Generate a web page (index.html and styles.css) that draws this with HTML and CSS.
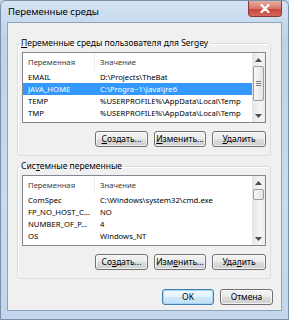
FILE: index.html
```html
<!DOCTYPE html>
<html lang="ru">
<head>
  <meta charset="UTF-8" />
  <title>Переменные среды</title>
  <link rel="stylesheet" href="styles.css">
</head>
<body>
  <div class="window">
    <div class="titlebar">
      <span class="title">Переменные среды</span>
      <span class="close">
        <svg width="10" height="9" viewBox="0 0 10 9"><path d="M1.5 1 L8.5 8 M8.5 1 L1.5 8" stroke="#fff" stroke-width="2.2" stroke-linecap="round"/></svg>
      </span>
    </div>

    <div class="client">
      <!-- user variables -->
      <fieldset class="group">
        <legend><u>П</u>еременные среды пользователя для Sergey</legend>
        <div class="list">
          <div class="table">
            <div class="row head"><span class="col1">Переменная</span><span>Значение</span></div>
            <div class="row"><span>EMAIL</span><span>D:\Projects\TheBat</span></div>
            <div class="row sel"><span>JAVA_HOME</span><span>C:\Progra~1\Java\jre6</span></div>
            <div class="row"><span>TEMP</span><span>%USERPROFILE%\AppData\Local\Temp</span></div>
            <div class="row"><span>TMP</span><span>%USERPROFILE%\AppData\Local\Temp</span></div>
          </div>
          <div class="scrollbar">
            <div class="arrow"><svg width="7" height="4" viewBox="0 0 7 4"><path d="M0 4 L3.5 0 L7 4 Z" fill="#4d4d4d"/></svg></div>
            <div class="track"><div class="thumb thumb-user"><span class="grip"></span></div></div>
            <div class="arrow"><svg width="7" height="4" viewBox="0 0 7 4"><path d="M0 0 L7 0 L3.5 4 Z" fill="#4d4d4d"/></svg></div>
          </div>
        </div>
        <div class="buttons">
          <button class="btn w-create"><u>С</u>оздать...</button>
          <button class="btn w-edit"><u>И</u>зменить...</button>
          <button class="btn w-delete"><u>У</u>далить</button>
        </div>
      </fieldset>

      <!-- system variables -->
      <fieldset class="group group-sys">
        <legend>Сис<u>т</u>емные переменные</legend>
        <div class="list">
          <div class="table">
            <div class="row head"><span class="col1">Переменная</span><span>Значение</span></div>
            <div class="row"><span>ComSpec</span><span>C:\Windows\system32\cmd.exe</span></div>
            <div class="row"><span>FP_NO_HOST_C...</span><span>NO</span></div>
            <div class="row"><span>NUMBER_OF_P...</span><span>4</span></div>
            <div class="row"><span>OS</span><span>Windows_NT</span></div>
          </div>
          <div class="scrollbar">
            <div class="arrow"><svg width="7" height="4" viewBox="0 0 7 4"><path d="M0 4 L3.5 0 L7 4 Z" fill="#4d4d4d"/></svg></div>
            <div class="track"><div class="thumb thumb-sys"></div></div>
            <div class="arrow"><svg width="7" height="4" viewBox="0 0 7 4"><path d="M0 0 L7 0 L3.5 4 Z" fill="#4d4d4d"/></svg></div>
          </div>
        </div>
        <div class="buttons">
          <button class="btn w-create">Со<u>з</u>дать...</button>
          <button class="btn w-edit">Изм<u>е</u>нить...</button>
          <button class="btn w-delete">Уда<u>л</u>ить</button>
        </div>
      </fieldset>

      <div class="footer">
        <button class="btn btn-default w-ok">OK</button>
        <button class="btn w-cancel">Отмена</button>
      </div>
    </div>
  </div>
</body>
</html>
```

FILE: styles.css
```css
body {
  margin: 0;
  font-family: "Noto Sans", "Open Sans", sans-serif;
  font-size: 8.5px;
  color: #000;
  background: #c2d5ea;
  overflow: hidden;
}
.window {
  width: 289px;
  height: 320px;
  box-sizing: border-box;
  border: 1px solid #7890aa;
  border-radius: 6px 6px 0 0;
  background: linear-gradient(#d3e3f3, #bed2e8 40px, #c9dbee 200px, #c3d6eb);
  padding: 0 6px 7px;
  display: flex;
  flex-direction: column;
}
.titlebar {
  height: 21px;
  display: flex;
  justify-content: space-between;
  align-items: flex-start;
}
.title {
  font-size: 9.5px;
  padding: 4px 0 0 1px;
}
.close {
  width: 34px;
  height: 16px;
  box-sizing: border-box;
  border: 1px solid #8a3a33;
  border-top: none;
  border-radius: 0 0 4px 4px;
  background: linear-gradient(#e8aca4, #d7776b 50%, #c4453a 55%, #d7675b);
  display: flex;
  align-items: center;
  justify-content: center;
}
.client {
  border: 1px solid #8ea4bb;
  background: #f0f0f0;
  padding: 14px 8px 5px 9px;
}

/* group boxes */
.group {
  margin: 0 2px 0 0;
  padding: 3px 4px 8px;
  border: 1px solid #d5dfe5;
  border-radius: 3px;
  box-shadow: inset 1px 1px 0 #fff;
}
.group-sys {
  margin-top: 4px;
}
.group legend {
  padding: 0 2px;
  margin-left: -3px;
  line-height: 12px;
}

/* list view */
.list {
  height: 71px;
  box-sizing: border-box;
  border: 1px solid #828790;
  background: #fff;
  display: flex;
}
.table {
  flex: 1;
  overflow: hidden;
}
.row {
  display: grid;
  grid-template-columns: 72px 1fr;
  height: 12px;
  line-height: 12px;
  font-size: 7.7px;
}
.row span {
  padding-left: 5px;
  white-space: nowrap;
  overflow: hidden;
}
.row.head {
  height: 18px;
  line-height: 18px;
  color: #3a3a3a;
}
.row.head .col1 {
  border-right: 1px solid #eeeeee;
}
.row.sel {
  background: #3399ff;
  color: #fff;
}

/* scrollbar */
.scrollbar {
  width: 13px;
  display: flex;
  flex-direction: column;
  background: linear-gradient(90deg, #e4e4e4, #f4f4f4 60%, #ececec);
}
.arrow {
  height: 13px;
  display: flex;
  align-items: center;
  justify-content: center;
}
.track {
  flex: 1;
  padding: 0 1px;
}
.thumb {
  box-sizing: border-box;
  border: 1px solid #9c9c9c;
  border-radius: 2px;
  background: linear-gradient(90deg, #f7f7f7, #e3e3e3);
  display: flex;
  align-items: center;
  justify-content: center;
}
.thumb-user {
  height: 35px;
}
.thumb-sys {
  height: 11px;
}
.grip {
  width: 5px;
  height: 6px;
  background: repeating-linear-gradient(#7f7f7f 0 1px, transparent 1px 2px);
}

/* buttons */
.buttons, .footer {
  display: flex;
  justify-content: flex-end;
  gap: 6px;
}
.buttons {
  margin-top: 8px;
}
.footer {
  margin-top: 10px;
}
.btn {
  height: 16px;
  box-sizing: border-box;
  padding: 0;
  border: 1px solid #707070;
  border-radius: 3px;
  background: linear-gradient(#f3f3f3, #ebebeb 48%, #dcdcdc 52%, #cfcfcf);
  box-shadow: inset 0 0 0 1px rgba(255,255,255,0.7);
  font-family: inherit;
  font-size: 8.5px;
  line-height: 14px;
  color: #000;
}
.btn-default {
  border-color: #3c7fb1;
  background: linear-gradient(#f1f9fe, #e3f2fc 48%, #cfe8f8 52%, #c3e0f4);
  box-shadow: inset 0 0 0 1px #a6d5f5;
}
.w-create { width: 53px; }
.w-edit { width: 52px; }
.w-delete { width: 54px; }
.w-ok { width: 52px; }
.w-cancel { width: 53px; }
```
